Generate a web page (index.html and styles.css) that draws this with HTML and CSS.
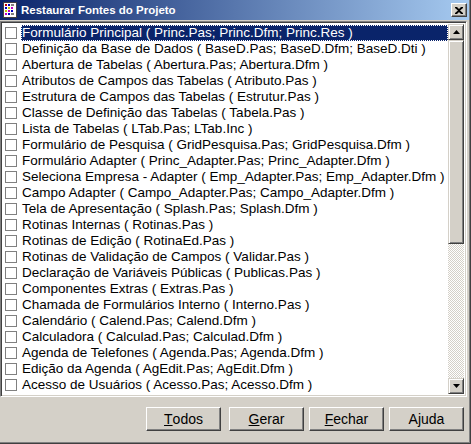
FILE: index.html
```html
<!DOCTYPE html>
<html>
<head>
<meta charset="utf-8">
<link rel="stylesheet" href="styles.css">
</head>
<body>
<div class="window">
  <div class="titlebar">
    <svg class="appicon" width="16" height="16" viewBox="0 0 16 16">
      <rect x="1.5" y="0.5" width="13" height="15" fill="#fff" stroke="#404040"/>
      <rect x="3" y="2" width="2" height="2" fill="#c00000"/>
      <rect x="6" y="2" width="2" height="2" fill="#0000c0"/>
      <rect x="9" y="2" width="3" height="2" fill="#808080"/>
      <rect x="3" y="5" width="2" height="2" fill="#0000c0"/>
      <rect x="6" y="5" width="2" height="2" fill="#c0c000"/>
      <rect x="9" y="5" width="2" height="2" fill="#c000c0"/>
      <rect x="3" y="8" width="2" height="2" fill="#c0c000"/>
      <rect x="6" y="8" width="2" height="2" fill="#c000c0"/>
      <rect x="9" y="8" width="2" height="2" fill="#0000c0"/>
      <rect x="3" y="11" width="2" height="2" fill="#c000c0"/>
      <rect x="6" y="11" width="2" height="2" fill="#0000c0"/>
      <rect x="9" y="11" width="3" height="2" fill="#808080"/>
    </svg>
    <span class="title">Restaurar Fontes do Projeto</span>
    <div class="closebtn">
      <svg width="8" height="7" viewBox="0 0 8 7"><path d="M0 0h2l2 2 2-2h2v1L5 3.5 8 6v1H6L4 5 2 7H0V6l3-2.5L0 1z" fill="#000"/></svg>
    </div>
  </div>
  <div class="listbox">
    <div class="items">
      <div class="row selected"><span class="cb"></span><span class="txt">Formulário Principal ( Princ.Pas; Princ.Dfm; Princ.Res )</span></div>
      <div class="row"><span class="cb"></span><span class="txt">Definição da Base de Dados ( BaseD.Pas; BaseD.Dfm; BaseD.Dti )</span></div>
      <div class="row"><span class="cb"></span><span class="txt">Abertura de Tabelas ( Abertura.Pas; Abertura.Dfm )</span></div>
      <div class="row"><span class="cb"></span><span class="txt">Atributos de Campos das Tabelas ( Atributo.Pas )</span></div>
      <div class="row"><span class="cb"></span><span class="txt">Estrutura de Campos das Tabelas ( Estrutur.Pas )</span></div>
      <div class="row"><span class="cb"></span><span class="txt">Classe de Definição das Tabelas ( Tabela.Pas )</span></div>
      <div class="row"><span class="cb"></span><span class="txt">Lista de Tabelas ( LTab.Pas; LTab.Inc )</span></div>
      <div class="row"><span class="cb"></span><span class="txt">Formulário de Pesquisa ( GridPesquisa.Pas; GridPesquisa.Dfm )</span></div>
      <div class="row"><span class="cb"></span><span class="txt">Formulário Adapter ( Princ_Adapter.Pas; Princ_Adapter.Dfm )</span></div>
      <div class="row"><span class="cb"></span><span class="txt">Seleciona Empresa - Adapter ( Emp_Adapter.Pas; Emp_Adapter.Dfm )</span></div>
      <div class="row"><span class="cb"></span><span class="txt">Campo Adapter ( Campo_Adapter.Pas; Campo_Adapter.Dfm )</span></div>
      <div class="row"><span class="cb"></span><span class="txt">Tela de Apresentação ( Splash.Pas; Splash.Dfm )</span></div>
      <div class="row"><span class="cb"></span><span class="txt">Rotinas Internas ( Rotinas.Pas )</span></div>
      <div class="row"><span class="cb"></span><span class="txt">Rotinas de Edição ( RotinaEd.Pas )</span></div>
      <div class="row"><span class="cb"></span><span class="txt">Rotinas de Validação de Campos ( Validar.Pas )</span></div>
      <div class="row"><span class="cb"></span><span class="txt">Declaração de Variáveis Públicas ( Publicas.Pas )</span></div>
      <div class="row"><span class="cb"></span><span class="txt">Componentes Extras ( Extras.Pas )</span></div>
      <div class="row"><span class="cb"></span><span class="txt">Chamada de Formulários Interno ( Interno.Pas )</span></div>
      <div class="row"><span class="cb"></span><span class="txt">Calendário ( Calend.Pas; Calend.Dfm )</span></div>
      <div class="row"><span class="cb"></span><span class="txt">Calculadora ( Calculad.Pas; Calculad.Dfm )</span></div>
      <div class="row"><span class="cb"></span><span class="txt">Agenda de Telefones ( Agenda.Pas; Agenda.Dfm )</span></div>
      <div class="row"><span class="cb"></span><span class="txt">Edição da Agenda ( AgEdit.Pas; AgEdit.Dfm )</span></div>
      <div class="row"><span class="cb"></span><span class="txt">Acesso de Usuários ( Acesso.Pas; Acesso.Dfm )</span></div>
    </div>
    <div class="scrollbar">
      <div class="sbtn"><svg width="7" height="4" viewBox="0 0 7 4"><path d="M3.5 0L7 4H0z" fill="#000"/></svg></div>
      <div class="thumb"></div>
      <div class="track"></div>
      <div class="sbtn"><svg width="7" height="4" viewBox="0 0 7 4"><path d="M0 0h7L3.5 4z" fill="#000"/></svg></div>
    </div>
  </div>
  <div class="footer">
    <div class="btn first"><span class="u">T</span>odos</div>
    <div class="btn"><span class="u">G</span>erar</div>
    <div class="btn"><span class="u">F</span>echar</div>
    <div class="btn">Ajuda</div>
  </div>
</div>
</body>
</html>
```
FILE: styles.css
```css
html, body {
  margin: 0;
  padding: 0;
}
body {
  width: 471px;
  height: 444px;
  overflow: hidden;
  background: #D4D0C8;
  font-family: "Liberation Sans", Arial, sans-serif;
  font-size: 14px;
  color: #000;
}
.window {
  width: 471px;
  height: 444px;
  box-sizing: border-box;
  border-right: 1px solid #404040;
  border-bottom: 1px solid #404040;
  box-shadow: inset -1px -1px 0 #808080;
  display: flex;
  flex-direction: column;
  padding: 0 3px 4px 0;
}
.titlebar {
  height: 20px;
  flex: none;
  display: flex;
  align-items: center;
  background: linear-gradient(to right, #0A246A, #A6CAF0);
  padding: 0 2px 0 2px;
  margin-right: -2px;
}
.appicon {
  flex: none;
  margin-right: 3px;
}
.title {
  color: #fff;
  font-weight: bold;
  font-size: 11.5px;
  flex: 1;
  white-space: nowrap;
}
.closebtn {
  width: 16px;
  height: 14px;
  box-sizing: border-box;
  background: #D4D0C8;
  border: 1px solid;
  border-color: #fff #404040 #404040 #fff;
  box-shadow: inset -1px -1px 0 #808080;
  display: flex;
  align-items: center;
  justify-content: center;
}
.listbox {
  flex: none;
  height: 376px;
  margin-top: 1px;
  box-sizing: border-box;
  background: #fff;
  border: 1px solid;
  border-color: #808080 #fff #fff #808080;
  box-shadow: inset 1px 1px 0 #404040, inset -1px -1px 0 #D4D0C8;
  padding: 2px;
  display: flex;
  overflow: hidden;
}
.items {
  flex: 1;
  min-width: 0;
  overflow: hidden;
  padding-top: 1px;
}
.row {
  height: 16px;
  display: flex;
  align-items: center;
  white-space: nowrap;
}
.cb {
  flex: none;
  width: 12px;
  height: 12px;
  box-sizing: border-box;
  border: 1px solid #808080;
  background: #fff;
  margin-left: 2px;
  margin-right: 4px;
}
.txt {
  flex: 1;
  height: 100%;
  line-height: 16px;
  padding-left: 1px;
  font-size: 13.5px;
  box-sizing: border-box;
}
.selected .txt {
  background: #0A246A;
  color: #fff;
  outline: 1px dotted #fff;
  outline-offset: -1px;
}
.scrollbar {
  flex: none;
  width: 16px;
  display: flex;
  flex-direction: column;
}
.sbtn {
  flex: none;
  height: 16px;
  box-sizing: border-box;
  background: #D4D0C8;
  border: 1px solid;
  border-color: #D4D0C8 #404040 #404040 #D4D0C8;
  box-shadow: inset 1px 1px 0 #fff, inset -1px -1px 0 #808080;
  display: flex;
  align-items: center;
  justify-content: center;
}
.thumb {
  flex: none;
  height: 204px;
  box-sizing: border-box;
  background: #D4D0C8;
  border: 1px solid;
  border-color: #D4D0C8 #404040 #404040 #D4D0C8;
  box-shadow: inset 1px 1px 0 #fff, inset -1px -1px 0 #808080;
}
.track {
  flex: 1;
  background-image: conic-gradient(#fff 25%, #D4D0C8 0 50%, #fff 0 75%, #D4D0C8 0);
  background-size: 2px 2px;
}
.footer {
  flex: 1;
  display: flex;
  justify-content: flex-end;
  align-items: center;
  gap: 5px;
  padding-right: 3px;
  padding-top: 2px;
}
.btn {
  width: 75px;
  height: 24px;
  box-sizing: border-box;
  border: 1px solid;
  border-color: #fff #404040 #404040 #fff;
  box-shadow: inset -1px -1px 0 #808080;
  display: flex;
  align-items: center;
  justify-content: center;
  font-size: 14px;
}
.btn.first {
  margin-right: 3px;
}
.u {
  text-decoration: underline;
}
```
